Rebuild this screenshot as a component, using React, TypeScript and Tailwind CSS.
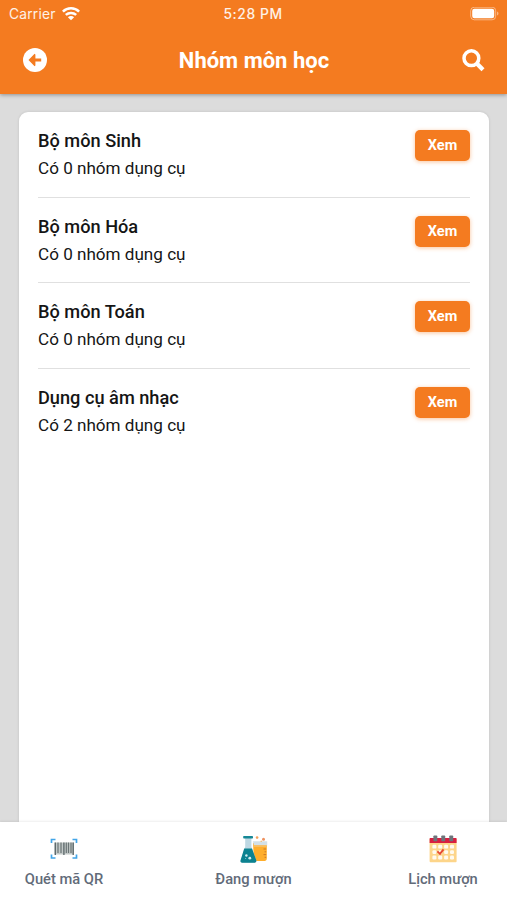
import type { ReactNode } from 'react';

interface Subject {
  name: string;
  count: number;
}

const subjects: Subject[] = [
  { name: 'Bộ môn Sinh', count: 0 },
  { name: 'Bộ môn Hóa', count: 0 },
  { name: 'Bộ môn Toán', count: 0 },
  { name: 'Dụng cụ âm nhạc', count: 2 },
];

function WifiIcon() {
  return (
    <svg width="18" height="14" viewBox="0 0 18 14" fill="none" stroke="white" strokeWidth="2.5">
      <path d="M0.9 4.7C5.4 0.2 12.6 0.2 17.1 4.7" />
      <path d="M3.8 7.9C6.8 5.2 11.2 5.2 14.2 7.9" />
      <path d="M9 13.3L5.9 10.2C7.6 8.6 10.4 8.6 12.1 10.2Z" fill="white" stroke="none" />
    </svg>
  );
}

function BatteryIcon() {
  return (
    <svg width="30" height="14" viewBox="0 0 30 14" fill="none">
      <rect x="0.7" y="0.2" width="25" height="12.6" rx="3.6" stroke="white" strokeOpacity="0.45" />
      <rect x="2.2" y="1.7" width="22" height="9.6" rx="2.2" fill="white" />
      <path d="M27 4.5C29 5.2 29 7.9 27 8.6Z" fill="white" fillOpacity="0.45" />
    </svg>
  );
}

function BackIcon() {
  return (
    <svg width="24" height="24" viewBox="0 0 24 24">
      <circle cx="12" cy="12" r="12" fill="white" />
      <path d="M5.5 12L11.6 5.8L12.4 6.6V10.4H18.2V13.6H12.4V17.4L11.6 18.2Z" fill="#f47b20" />
    </svg>
  );
}

function SearchIcon() {
  return (
    <svg width="23" height="23" viewBox="0 0 23 23" fill="none" stroke="white">
      <circle cx="9.4" cy="9.2" r="7.4" strokeWidth="3.5" />
      <path d="M14.8 14.6L21 20.8" strokeWidth="4.3" />
    </svg>
  );
}

function BarcodeIcon() {
  return (
    <svg width="28" height="28" viewBox="0 0 28 28" fill="none">
      <path
        d="M1.5 8V4.5H5.5M22.5 4.5H26.5V8M26.5 19.5V23H22.5M5.5 23H1.5V19.5"
        stroke="#42a5e8"
        strokeWidth="1.7"
      />
      <rect x="4.5" y="7.5" width="19.5" height="12" fill="#c3c9c8" />
      <path d="M5.3 7.5V20M13.9 7.5V20M23.2 7.5V20" stroke="#596568" strokeWidth="1.3" />
      <path d="M8 7.5V18M11 7.5V18M16.3 7.5V18M18.5 7.5V18M21 7.5V18" stroke="#6a7475" strokeWidth="1.2" />
    </svg>
  );
}

function FlaskIcon() {
  return (
    <svg width="28" height="28" viewBox="0 0 28 28" fill="none">
      <path d="M13 8H26.8V23.5C26.8 25 26 25.9 24.6 25.9H14Z" fill="#ffae2b" />
      <path d="M12.8 6.2H27.2V10.5H14Z" fill="#d3e0e6" />
      <path d="M13.5 10.3H26.8V12H14Z" fill="#f9bd5d" />
      <path d="M23.5 14H26.2M24.6 16.8H26.2M23.5 19.6H26.2M24.6 22.3H26.2" stroke="#c97926" strokeWidth="1" />
      <circle cx="17.1" cy="2.6" r="1.3" fill="#f5a25d" />
      <circle cx="23.5" cy="4.3" r="1.5" fill="#ee9260" />
      <circle cx="21.2" cy="6.3" r="0.7" fill="#f5b15d" />
      <path d="M5.2 3H11.4V11.8L16.3 25.2C16.6 26.5 16 27.7 14.6 27.7H2.2C0.8 27.7 0.2 26.5 0.6 25.2L5.2 11.8Z" fill="#bed8e3" />
      <path d="M4.2 13.5H12L16.3 25.2C16.6 26.5 16 27.7 14.6 27.7H2.2C0.8 27.7 0.2 26.5 0.6 25.2Z" fill="#0c8290" />
      <rect x="3.2" y="0.9" width="9.8" height="2.5" rx="0.7" fill="#168896" />
      <circle cx="6.4" cy="20.5" r="1.2" fill="#d2edf1" />
      <circle cx="9.8" cy="23.2" r="1.4" fill="#d2edf1" />
      <circle cx="5.6" cy="23.5" r="0.6" fill="#86c5ce" />
    </svg>
  );
}

function CalendarIcon() {
  return (
    <svg width="28" height="28" viewBox="0 0 28 28" fill="none">
      <rect x="0.6" y="3" width="27" height="24.3" rx="1" fill="#fdd58a" />
      <path d="M0.6 8V4C0.6 3.4 1 3 1.6 3H26.6C27.2 3 27.6 3.4 27.6 4V8Z" fill="#d81e40" />
      {[6.3, 14.2, 22.2].map((x) => (
        <rect key={x} x={x - 1.9} y="0.4" width="3.9" height="5.8" rx="0.8" fill="#6e737a" />
      ))}
      {[9.8, 15.2, 20.6].map((y) =>
        [3.4, 9.2, 15.1, 21].map((x) => (
          <rect key={`${x}-${y}`} x={x} y={y} width="4" height="3.8" rx="1.2" fill="#fffaf0" />
        )),
      )}
      <path d="M8.4 16.3L11 18.9L14.5 14.3" stroke="#e64a32" strokeWidth="1.9" />
    </svg>
  );
}

function StatusBar() {
  return (
    <div className="grid grid-cols-3 items-center h-[27px] pl-[9px] pr-[7px] text-[13.8px] text-white/90">
      <div className="flex items-center gap-[6px]">
        <span className="pt-px tracking-[0.2px]">Carrier</span>
        <WifiIcon />
      </div>
      <span className="-ml-[3px] pt-px text-center font-medium tracking-[0.6px]">5:28 PM</span>
      <div className="flex justify-end">
        <BatteryIcon />
      </div>
    </div>
  );
}

function Header() {
  return (
    <header className="relative z-10 h-[94px] bg-[#f47b20] shadow-[0_1px_4px_rgba(0,0,0,0.35)]">
      <div className="font-['Inter',sans-serif]">
        <StatusBar />
      </div>
      <div className="flex items-center justify-between h-[66px] pl-[23px] pr-[22px]">
        <BackIcon />
        <h1 className="pr-px text-[22px] font-bold text-white">Nhóm môn học</h1>
        <SearchIcon />
      </div>
    </header>
  );
}

function SubjectRow({ subject }: { subject: Subject }) {
  return (
    <li className="flex items-start justify-between h-[85.5px] pt-[18px] border-b border-[#e0e0e0] last:border-b-0">
      <div className="text-[#151515]">
        <h2 className="text-[18.2px] leading-[22px] font-medium">{subject.name}</h2>
        <p className="mt-[5px] text-[17.1px] leading-[22px]">Có {subject.count} nhóm dụng cụ</p>
      </div>
      <button className="w-[55px] h-[31px] pt-px rounded-[5px] bg-[#f47b20] text-[14.5px] font-bold text-white shadow-[0_1px_4px_rgba(244,123,32,0.45)]">
        Xem
      </button>
    </li>
  );
}

function TabItem({ icon, label }: { icon: ReactNode; label: string }) {
  return (
    <button className="flex flex-col items-center w-[128px] pt-[13px]">
      {icon}
      <span className="mt-[6px] text-[14.7px] leading-5 font-medium text-[#626b79]">{label}</span>
    </button>
  );
}

export default function App() {
  return (
    <div className="flex flex-col w-full h-screen overflow-hidden bg-[#dcdcdc] font-['Roboto',sans-serif]">
      <Header />

      <main className="flex-1 min-h-0 pt-[18px] pl-[19px] pr-[18px]">
        <ul className="h-full px-[19px] rounded-t-[9px] bg-white shadow-[0_0_3px_rgba(0,0,0,0.12)]">
          {subjects.map((subject) => (
            <SubjectRow key={subject.name} subject={subject} />
          ))}
        </ul>
      </main>

      {/* Bottom tabs */}
      <nav className="relative z-10 flex justify-between h-[78px] bg-white shadow-[0_-1px_2px_rgba(0,0,0,0.07)]">
        <TabItem icon={<BarcodeIcon />} label="Quét mã QR" />
        <TabItem icon={<FlaskIcon />} label="Đang mượn" />
        <TabItem icon={<CalendarIcon />} label="Lịch mượn" />
      </nav>
    </div>
  );
}
